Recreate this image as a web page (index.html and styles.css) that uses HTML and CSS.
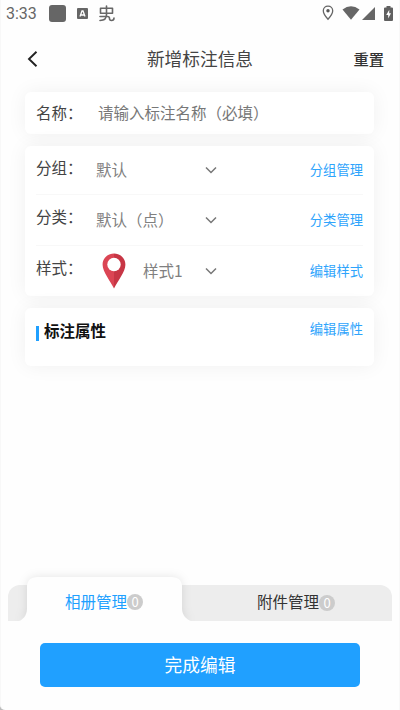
FILE: index.html
```html
<!DOCTYPE html>
<html lang="zh-CN">
<head>
<meta charset="utf-8">
<title>新增标注信息</title>
<link rel="stylesheet" href="styles.css">
</head>
<body>
<div class="screen">
  <div class="status">
    <span class="clock">3:33</span>
    <span class="app-square"></span>
    <svg class="app-a" viewBox="0 0 11 11"><rect width="11" height="11" rx="1" fill="#666"/><path d="M3 8.500 5 3h1l2 5.500M4 7h3" fill="none" stroke="#fff" stroke-width="1.300"/></svg>
    <svg class="app-bug" viewBox="0 0 17 17" fill="none" stroke="#666" stroke-width="1.600" stroke-linecap="round" stroke-linejoin="round"><path d="M2.500 3.300h12v5h-12ZM8.500 1v8.500Q8.500 15.500 2 15.500M2 11.500h7.500q2 0 2 2 0 2 2 2 2.500 0 2.500-2.500"/></svg>
    <span class="spacer"></span>
    <svg class="location" viewBox="0 0 12 16"><path d="M6 1.200C3.300 1.200 1.300 3.200 1.300 5.700 1.300 9 6 14.300 6 14.300s4.700-5.300 4.700-8.600c0-2.500-2-4.500-4.700-4.500Z" fill="none" stroke="#666" stroke-width="1.300"/><circle cx="6" cy="5.800" r="1.700" fill="#555"/></svg>
    <svg class="wifi" viewBox="0 0 18 14"><path d="M.5 3.500Q9-3 17.500 3.500L9 13.800Z" fill="#666"/></svg>
    <svg class="signal" viewBox="0 0 13 13"><path d="M13 0v13H0Z" fill="#666"/></svg>
    <svg class="battery" viewBox="0 0 9 15"><path d="M2.500 0h4v1.500H8q1 0 1 1V14q0 1-1 1H1q-1 0-1-1V2.500q0-1 1-1h1.500Z" fill="#606060"/><path d="M5.300 3.800 2.200 8.900h2v3.600L7 7.300H5.200Z" fill="#fff"/></svg>
  </div>

  <header class="header">
    <svg class="back" viewBox="0 0 12 18"><path d="M10.500 1.800 3 9l7.500 7.200" fill="none" stroke="#222" stroke-width="1.900"/></svg>
    <h1 class="title">新增标注信息</h1>
    <span class="reset">重置</span>
  </header>

  <main class="content">
    <section class="card name-card">
      <span class="label">名称：</span>
      <span class="placeholder">请输入标注名称（必填）</span>
    </section>

    <section class="card options">
      <div class="row">
        <span class="label">分组：</span>
        <span class="value">默认</span>
        <svg class="chevron" viewBox="0 0 12 8"><path d="m1 1.500 5 5 5-5" fill="none" stroke="#777" stroke-width="1.500"/></svg>
        <span class="link">分组管理</span>
      </div>
      <div class="row">
        <span class="label">分类：</span>
        <span class="value">默认（点）</span>
        <svg class="chevron" viewBox="0 0 12 8"><path d="m1 1.500 5 5 5-5" fill="none" stroke="#777" stroke-width="1.500"/></svg>
        <span class="link">分类管理</span>
      </div>
      <div class="row">
        <span class="label">样式：</span>
        <span class="value style-value">
          <svg class="pin" viewBox="0 0 24 36"><path d="M12 .5C5.500.5.600 5.300.600 11.700.600 19 8.500 28 12 35.500Z" fill="#db4554"/><path d="M12 .5c6.500 0 11.400 4.800 11.400 11.200C23.400 19 15.500 28 12 35.500Z" fill="#c73645"/><circle cx="12" cy="11.500" r="6.700" fill="#fff"/></svg>
          <span>样式1</span>
        </span>
        <svg class="chevron" viewBox="0 0 12 8"><path d="m1 1.500 5 5 5-5" fill="none" stroke="#777" stroke-width="1.500"/></svg>
        <span class="link">编辑样式</span>
      </div>
    </section>

    <section class="card attributes">
      <span class="marker"></span>
      <h2 class="section-title">标注属性</h2>
      <span class="link">编辑属性</span>
    </section>
  </main>

  <div class="tabs">
    <svg class="tab-shape" viewBox="0 0 184 54"><path d="M10 54c4-1 8-6 8-12V20q0-10 11-10H162q11 0 11 10V42c0 6 5 11 9 12Z" fill="#fefefe"/></svg>
    <div class="tab active">相册管理<span class="badge">0</span></div>
    <div class="tab files">附件管理<span class="badge">0</span></div>
  </div>

  <button class="submit">完成编辑</button>
</div>
</body>
</html>
```
FILE: styles.css
```css
* {
  box-sizing: border-box;
}

body {
  margin: 0;
  background: #bbb;
  font-family: "Noto Sans CJK SC", sans-serif;
}

.screen {
  display: flex;
  flex-direction: column;
  height: 710px;
  overflow: hidden;
  border-left: 1px solid #f8f8f8;
  border-right: 1px solid #f8f8f8;
  border-bottom-left-radius: 5px;
  background: #fefefe;
}

.status {
  display: flex;
  align-items: center;
  height: 26px;
  padding: 0 6px 0 5px;
}

.clock {
  width: 43px;
  padding-top: 2px;
  color: #666;
  font: 16px/26px Roboto, sans-serif;
}

.app-square {
  width: 17px;
  height: 17px;
  border-radius: 3px;
  background: #666;
}

.app-a {
  width: 11px;
  height: 11px;
  margin-left: 11px;
}

.app-bug {
  width: 17px;
  height: 17px;
  margin-left: 10px;
}

.spacer {
  flex: 1;
}

.location {
  width: 12px;
  height: 16px;
  margin-right: 8px;
}

.wifi {
  width: 18px;
  height: 14px;
  margin-right: 2px;
}

.signal {
  width: 13px;
  height: 13px;
  margin-right: 9px;
}

.battery {
  width: 9px;
  height: 15px;
}

.header {
  display: grid;
  grid-template-columns: 80px 1fr 80px;
  align-items: center;
  height: 66px;
  padding: 0 15px 1px 25px;
}

.back {
  width: 12px;
  height: 18px;
}

.title {
  margin: 0 0 0 -10px;
  padding-bottom: 1px;
  color: #444;
  font-size: 17.7px;
  font-weight: 400;
  line-height: 26px;
  text-align: center;
}

.reset {
  padding-bottom: 2px;
  color: #333;
  font-size: 15.3px;
  font-weight: 500;
  text-align: right;
}

.content {
  display: flex;
  flex-direction: column;
  gap: 12px;
  height: 493px;
  padding: 0 25px 0 24px;
}

.card {
  border-radius: 6px;
  background: #fff;
  box-shadow: 0 0 20px rgba(0, 0, 0, 0.06);
}

.name-card {
  display: flex;
  align-items: center;
  height: 42px;
  padding: 0 11px 3px;
}

.label {
  width: 60px;
  flex: none;
  color: #444;
  font-size: 15.5px;
  line-height: 22px;
}

.placeholder {
  margin-left: 2px;
  color: #777;
  font-size: 15.5px;
  line-height: 22px;
}

.options {
  height: 150px;
  padding: 0 11px;
}

.row {
  display: flex;
  align-items: center;
  height: 50.5px;
  border-bottom: 1px solid #f8f8f8;
}

.row:first-child {
  height: 49px;
}

.row:last-child {
  border: 0;
}

.row .label {
  padding-bottom: 6px;
  line-height: 23px;
}

.value {
  width: 109px;
  padding-bottom: 2px;
  color: #808080;
  font-size: 15.5px;
  line-height: 22px;
}

.style-value {
  display: flex;
  align-items: center;
  padding-bottom: 0;
}

.style-value span {
  padding-bottom: 2px;
}

.pin {
  width: 24px;
  height: 36px;
  margin: 0 17px 0 6px;
}

.chevron {
  width: 12px;
  height: 8px;
}

.link {
  margin-left: auto;
  color: #2ea4fc;
  font-size: 13.3px;
  line-height: 20px;
}

.attributes {
  display: flex;
  align-items: flex-start;
  height: 58px;
  padding: 11px 11px 0;
}

.marker {
  width: 3px;
  height: 15px;
  margin: 7px 5px 0 0;
  background: #20a0ff;
}

.section-title {
  margin: 0;
  color: #111;
  font-size: 15.5px;
  font-weight: 700;
  line-height: 23px;
}

.tabs {
  position: relative;
  display: flex;
  height: 36px;
  margin: 0 7px;
  border-radius: 12px 12px 0 0;
  background: #ededed;
}

.tab-shape {
  position: absolute;
  top: -18px;
  left: 1px;
  width: 184px;
  height: 54px;
  overflow: visible;
  filter: drop-shadow(0 0 5px rgba(0, 0, 0, 0.1));
  clip-path: inset(-10px -10px 0 -10px);
}

.tab {
  position: relative;
  display: flex;
  align-items: center;
  justify-content: center;
  width: 192px;
  padding-bottom: 4px;
  color: #333;
  font-size: 15.5px;
  line-height: 22px;
}

.active {
  padding-bottom: 5px;
  color: #20a0ff;
}

.badge {
  width: 16px;
  height: 16px;
  margin-top: 3px;
  border-radius: 50%;
  background: #ccc;
  color: #fff;
  font-size: 13px;
  line-height: 16px;
  text-align: center;
}

.submit {
  width: 320px;
  height: 44px;
  margin: 22px 0 0 39px;
  padding: 0 0 2px;
  border: 0;
  border-radius: 5px;
  background: #20a0ff;
  color: #fff;
  font: 17.7px/42px "Noto Sans CJK SC", sans-serif;
}
```
